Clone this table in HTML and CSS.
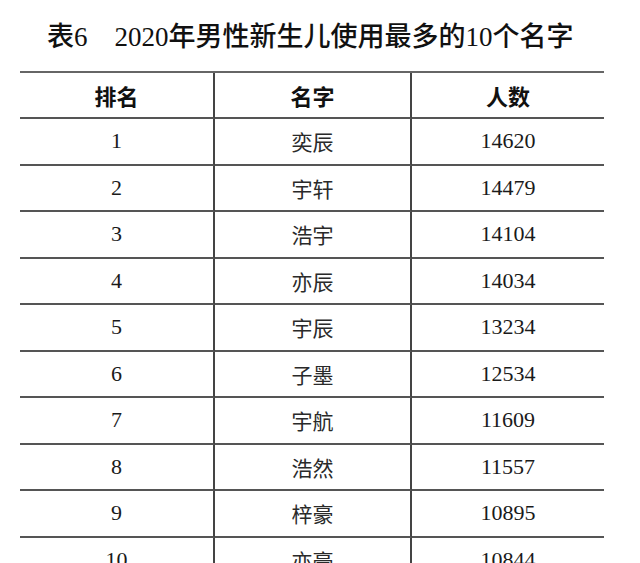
FILE: index.html
```html
<!DOCTYPE html>
<html lang="zh-CN">
<head>
<meta charset="utf-8">
<title>表6 2020年男性新生儿使用最多的10个名字</title>
<link rel="stylesheet" href="styles.css">
</head>
<body>
<div class="page">
  <h1 class="title"><span class="num">表</span><span class="lat">6</span><span class="gap"></span><span class="lat">2020</span>年男性新生儿使用最多的<span class="lat">10</span>个名字</h1>
  <table class="names">
    <colgroup>
      <col class="c1"><col class="c2"><col class="c3">
    </colgroup>
    <thead>
      <tr><th>排名</th><th>名字</th><th>人数</th></tr>
    </thead>
    <tbody>
      <tr><td class="n">1</td><td class="z">奕辰</td><td class="n">14620</td></tr>
      <tr><td class="n">2</td><td class="z">宇轩</td><td class="n">14479</td></tr>
      <tr><td class="n">3</td><td class="z">浩宇</td><td class="n">14104</td></tr>
      <tr><td class="n">4</td><td class="z">亦辰</td><td class="n">14034</td></tr>
      <tr><td class="n">5</td><td class="z">宇辰</td><td class="n">13234</td></tr>
      <tr><td class="n">6</td><td class="z">子墨</td><td class="n">12534</td></tr>
      <tr><td class="n">7</td><td class="z">宇航</td><td class="n">11609</td></tr>
      <tr><td class="n">8</td><td class="z">浩然</td><td class="n">11557</td></tr>
      <tr><td class="n">9</td><td class="z">梓豪</td><td class="n">10895</td></tr>
      <tr><td class="n">10</td><td class="z">亦豪</td><td class="n">10844</td></tr>
    </tbody>
  </table>
</div>
</body>
</html>
```
FILE: styles.css
```css
html, body {
  margin: 0;
  padding: 0;
  background: #ffffff;
}
body {
  height: 563px;
  overflow: hidden;
}
.page {
  padding: 17px 0 0 20px;
  color: #1a1a1a;
}
.title {
  margin: 0 0 16px 27px;
  font-family: "Noto Sans CJK SC", sans-serif;
  font-weight: 500;
  font-size: 27px;
  line-height: 36px;
  white-space: nowrap;
  color: #111;
}
.title .lat {
  font-family: "Liberation Serif", serif;
  font-weight: 400;
}
.title .gap {
  display: inline-block;
  width: 27px;
}
.names {
  width: 584px;
  border-collapse: separate;
  border-spacing: 0;
  table-layout: fixed;
  border-top: 2px solid #666;
}
.c1 { width: 195px; }
.c2 { width: 197px; }
.c3 { width: 192px; }
.names th,
.names td {
  padding: 0;
  text-align: center;
  border-bottom: 2px solid #555;
  border-right: 2px solid #444;
}
.names th:last-child,
.names td:last-child {
  border-right: none;
}
.names th {
  font-family: "Noto Sans CJK SC", sans-serif;
  font-weight: 700;
  font-size: 22px;
  line-height: 44px;
  color: #111;
}
.names td {
  line-height: 44.5px;
}
.names td.n {
  font-family: "Liberation Serif", serif;
  font-size: 22px;
}
.names td.z {
  font-family: "Noto Sans CJK SC", sans-serif;
  font-size: 21px;
  color: #2a2a2a;
}
```
